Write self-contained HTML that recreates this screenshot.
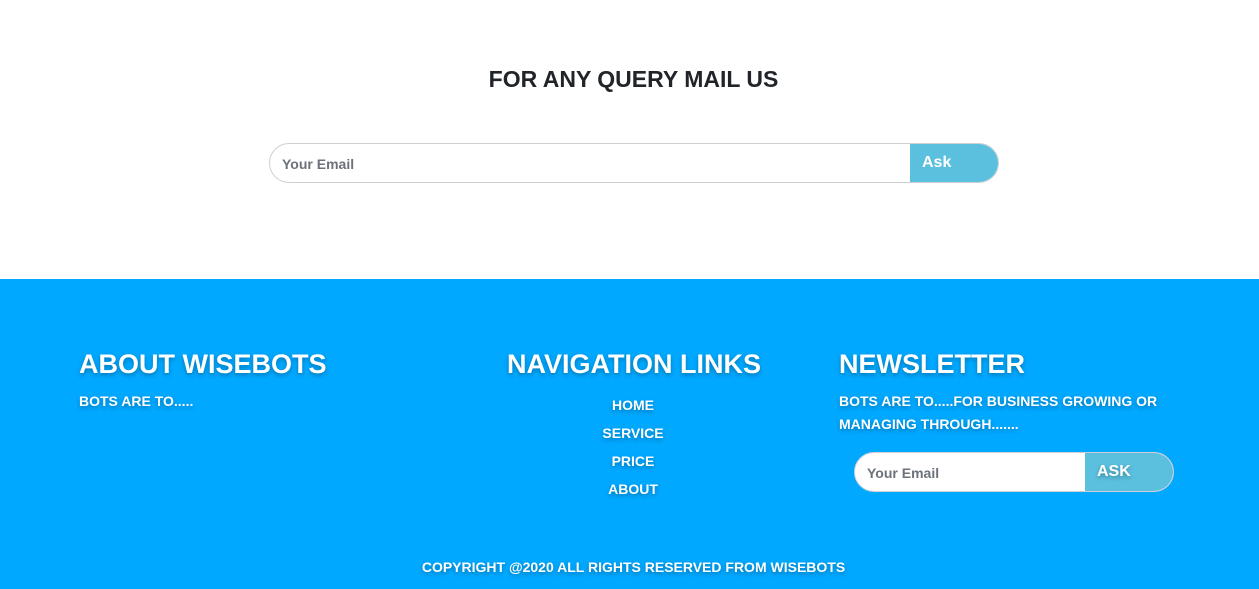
<!DOCTYPE html>
<html><head><style>
*{margin:0;padding:0;box-sizing:border-box}
body{width:1259px;height:589px;overflow:hidden;background:#fff;font-family:"Liberation Sans",sans-serif;font-weight:bold;position:relative}
.a{position:absolute;white-space:nowrap}
h2{position:absolute;left:4px;width:1259px;text-align:center;top:66px;font-size:23px;color:#212529}
.f{position:absolute;left:0;top:279px;width:1259px;height:310px;background:#00a8ff;color:#fff;text-shadow:0 2px 4px rgba(0,0,0,.3)}
.h{font-size:27px}
.s{font-size:14px}
</style></head><body>
<h2>FOR ANY QUERY MAIL US</h2>
<div class="a" style="left:269px;top:143px;width:730px;height:40px;border:1px solid #ccd0d5;border-radius:20px;overflow:hidden">
<div class="a" style="left:12px;top:12px;font-size:14px;color:#6c727a">Your Email</div>
<div class="a" style="left:640px;top:0;width:90px;height:40px;background:#5bc0de;color:#fff;font-size:16px;padding:10px 0 0 12px">Ask</div>
</div>
<div class="f">
<div class="a h" style="left:79px;top:70px">ABOUT WISEBOTS</div>
<div class="a s" style="left:79px;top:114px">BOTS ARE TO.....</div>
<div class="a h" style="left:501px;top:70px;width:266px;text-align:center">NAVIGATION LINKS</div>
<div class="a s" style="left:533px;width:200px;text-align:center;top:112px;line-height:28px">HOME<br>SERVICE<br>PRICE<br>ABOUT</div>
<div class="a h" style="left:839px;top:70px">NEWSLETTER</div>
<div class="a s" style="left:839px;top:111px;line-height:23px">BOTS ARE TO.....FOR BUSINESS GROWING OR<br>MANAGING THROUGH.......</div>
<div class="a" style="left:854px;top:173px;width:320px;height:40px;border:1px solid #ccd0d5;border-radius:20px;overflow:hidden;background:#fff;text-shadow:none">
<div class="a" style="left:12px;top:12px;font-size:14px;color:#6c727a">Your Email</div>
<div class="a" style="left:230px;top:0;width:90px;height:40px;background:#5bc0de;color:#fff;font-size:16px;padding:10px 0 0 12px;text-shadow:0 2px 4px rgba(0,0,0,.3)">ASK</div>
</div>
<div class="a s" style="left:0;width:1267px;text-align:center;top:280px">COPYRIGHT @2020 ALL RIGHTS RESERVED FROM WISEBOTS</div>
</div>
</body></html>
